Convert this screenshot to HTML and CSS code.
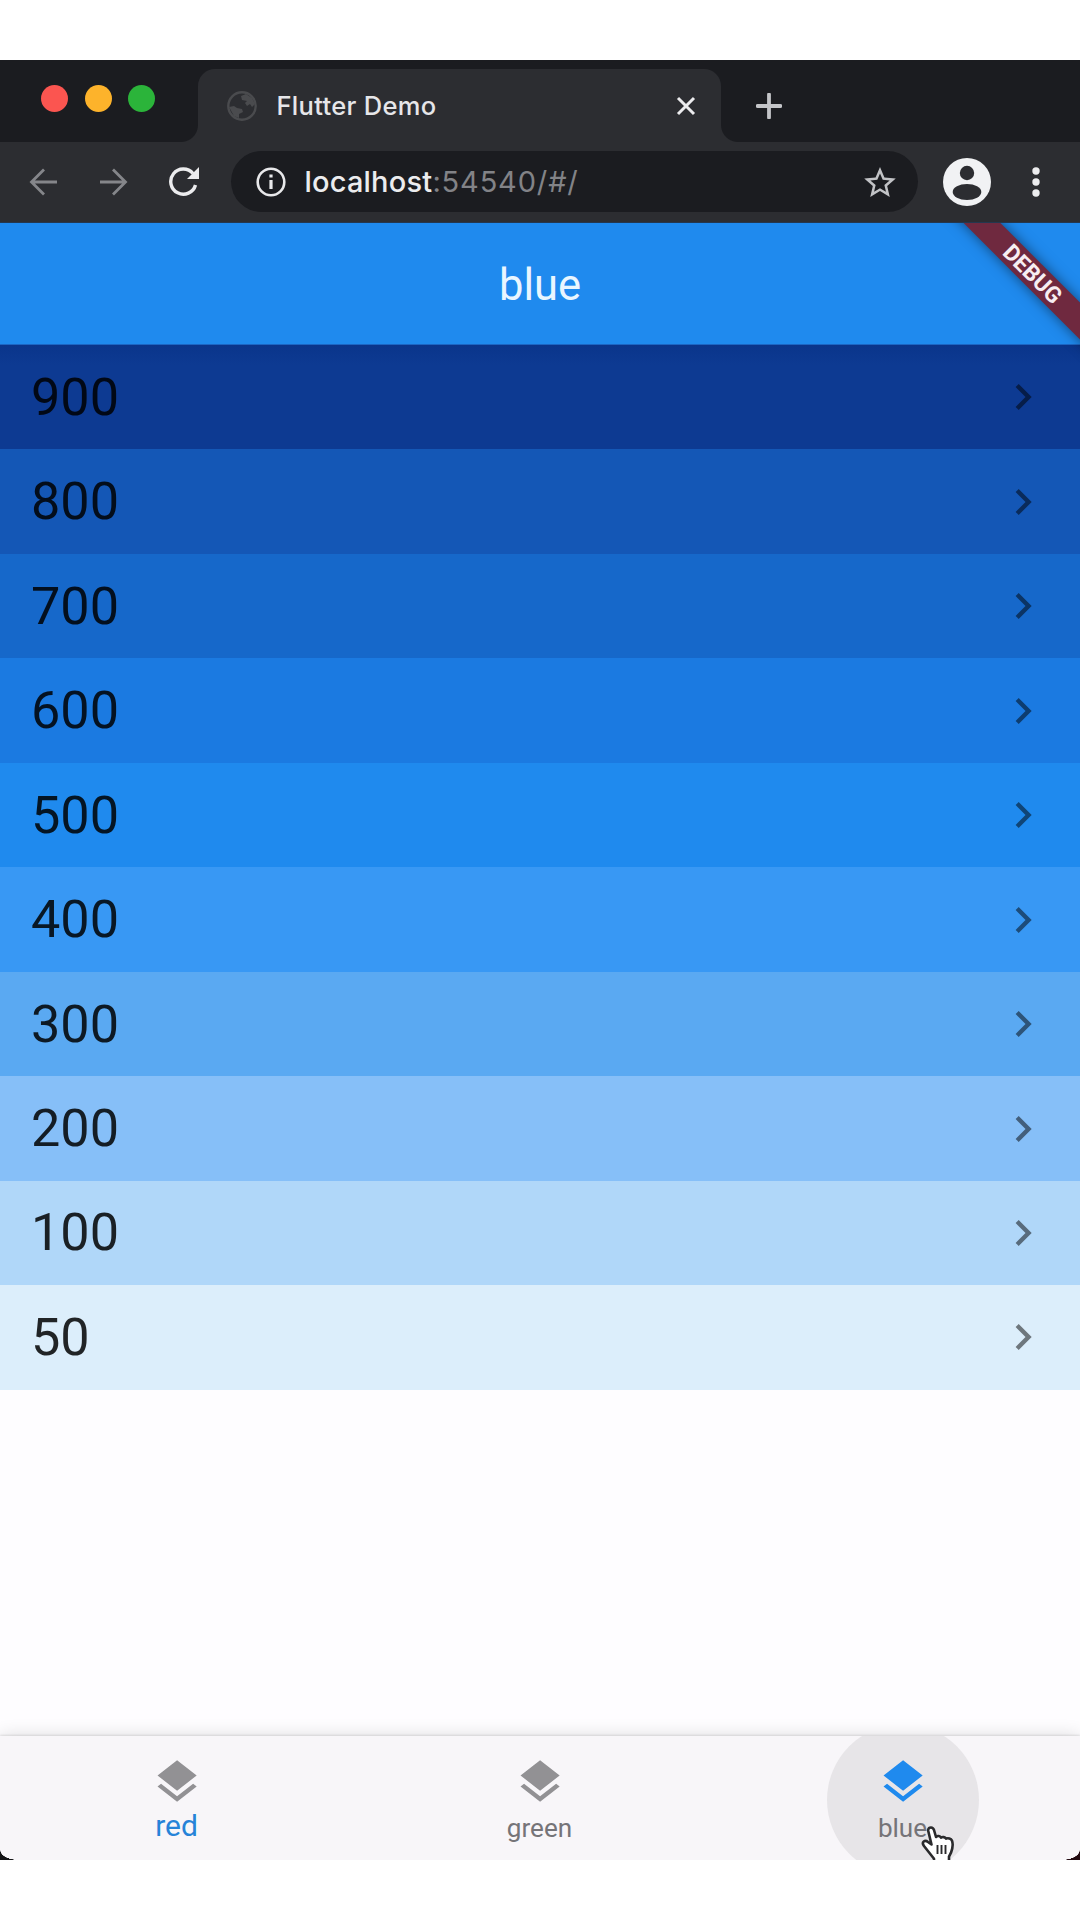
FILE: index.html
```html
<!DOCTYPE html>
<html lang="en">
<head>
<meta charset="utf-8">
<title>Flutter Demo</title>
<link rel="stylesheet" href="styles.css">
</head>
<body>
<svg class="defs" width="0" height="0" aria-hidden="true">
  <symbol id="layers" viewBox="0 0 24 24"><path d="M11.99 18.54l-7.37-5.73L3 14.07l9 7 9-7-1.63-1.27-7.38 5.74zM12 16l7.36-5.73L21 9l-9-7-9 7 1.63 1.27L12 16z"/></symbol>
  <symbol id="chevron" viewBox="0 0 24 24"><path d="M8.59 16.59L13.17 12 8.59 7.41 10 6l6 6-6 6z"/></symbol>
</svg>
<div class="window">
  <header class="tabs">
    <div class="lights"><i class="light red"></i><i class="light amber"></i><i class="light green"></i></div>
    <div class="tab">
      <svg class="globe" viewBox="0 0 30 30"><circle cx="15" cy="15" r="13.7" fill="none" stroke="#4a4b4e" stroke-width="2.4"/><path fill="#4a4b4e" d="M14 5l5-2 6 4 3 6-3 3-2-3-3 2-2-3 2-2-5-1zM2 16l5-1 3 2 5 1 1 3-4 2v4l-5-2z"/></svg>
      <span class="tab-title">Flutter Demo</span>
      <svg class="close" viewBox="0 0 20 20"><path d="M2 2l16 16M18 2L2 18"/></svg>
    </div>
    <svg class="plus" viewBox="0 0 26 26"><path d="M13 1.5v23M1.5 13h23"/></svg>
  </header>
  <div class="toolbar">
    <svg class="arrow" viewBox="0 0 30 28"><path d="M28 14H3M15 1.5L2.5 14 15 26.5"/></svg>
    <svg class="arrow" viewBox="0 0 30 28"><path d="M2 14h25M15 1.5L27.5 14 15 26.5"/></svg>
    <svg class="reload" viewBox="0 0 32 32"><path d="M27.5 19A12.6 12.6 0 1 1 25 7.5" fill="none" stroke="#ececee" stroke-width="3.4"/><path d="M31 1v12H19z" fill="#ececee"/></svg>
    <div class="omnibox">
      <svg class="info" viewBox="0 0 30 30"><circle cx="15" cy="15" r="13.3" fill="none" stroke="#e8e8ea" stroke-width="2.6"/><path d="M13.4 7.5h3.2v3.1h-3.2zM13.4 13h3.2v9h-3.2z" fill="#e8e8ea"/></svg>
      <span class="url">localhost<span class="path">:54540/#/</span></span>
      <svg class="star" viewBox="2 2 20 19"><path d="M22 9.24l-7.19-.62L12 2 9.19 8.63 2 9.24l5.46 4.73L5.82 21 12 17.27 18.18 21l-1.63-7.03L22 9.24zM12 15.4l-3.76 2.27 1-4.28-3.32-2.88 4.38-.38L12 6.1l1.71 4.04 4.38.38-3.32 2.88 1 4.28L12 15.4z"/></svg>
    </div>
    <svg class="avatar" viewBox="0 0 48 48"><circle cx="24" cy="24" r="24" fill="#f1f2f4"/><circle cx="24" cy="15" r="7.2" fill="#2c2d31"/><ellipse cx="24" cy="34" rx="14.3" ry="8" fill="#2c2d31"/></svg>
    <svg class="dots" viewBox="0 0 8 30"><circle cx="4" cy="4" r="3.7"/><circle cx="4" cy="15" r="3.7"/><circle cx="4" cy="26" r="3.7"/></svg>
  </div>
  <main class="app">
    <div class="appbar"><h1>blue</h1></div>
    <div class="ribbon">DEBUG</div>
    <ul class="shades">
      <li class="s900">900<svg><use href="#chevron"/></svg></li>
      <li class="s800">800<svg><use href="#chevron"/></svg></li>
      <li class="s700">700<svg><use href="#chevron"/></svg></li>
      <li class="s600">600<svg><use href="#chevron"/></svg></li>
      <li class="s500">500<svg><use href="#chevron"/></svg></li>
      <li class="s400">400<svg><use href="#chevron"/></svg></li>
      <li class="s300">300<svg><use href="#chevron"/></svg></li>
      <li class="s200">200<svg><use href="#chevron"/></svg></li>
      <li class="s100">100<svg><use href="#chevron"/></svg></li>
      <li class="s50">50<svg><use href="#chevron"/></svg></li>
    </ul>
    <nav class="bottom">
      <a class="item selected"><svg><use href="#layers"/></svg><span>red</span></a>
      <a class="item"><svg><use href="#layers"/></svg><span>green</span></a>
      <a class="item pressed"><svg><use href="#layers"/></svg><span>blue</span></a>
      <svg class="cursor" viewBox="0 0 34 40"><path d="M7 4C8 .5 12 1 13 4l2 7c1.500-1.500 4-1.200 5 .7 1.500-1.200 4-.7 5 1 2-1 5 0 6 2 1.500 4 .5 8-1 12l-2 4v8H13v-6L3 20c-3-4 1-6.500 4-4l3.500 2.500z" fill="#fff" stroke="#2a2a2c" stroke-width="2.6" stroke-linejoin="round"/><path d="M16.500 19v9M20.500 19v9M24.500 19v9" stroke="#2a2a2c" stroke-width="1.9"/></svg>
    </nav>
  </main>
  <i class="corner left"></i><i class="corner right"></i>
</div>
</body>
</html>
```
FILE: styles.css
```css
* { box-sizing: border-box; }
body { margin: 0; height: 1920px; padding: 60px 0; background: #fff; overflow: hidden; }
svg { display: block; flex: none; }
.defs { position: absolute; }
.window { position: relative; height: 1800px; display: flex; flex-direction: column; overflow: hidden; background: #2c2d31; }

.tabs { height: 82px; background: #1b1c20; display: flex; padding-top: 9px; }
.lights { width: 198px; display: flex; gap: 16.5px; padding: 15.5px 0 0 41px; }
.light { width: 27px; height: 27px; border-radius: 50%; }
.light.red { background: #fb5550; }
.light.amber { background: #fdb32b; }
.light.green { background: #2bb43a; }
.tab { position: relative; width: 523px; height: 73px; border-radius: 17px 17px 0 0; background: #2c2d31; display: flex; align-items: center; padding: 0 25px 0 29px; }
.tab::before, .tab::after { content: ""; position: absolute; bottom: 0; width: 17px; height: 17px; }
.tab::before { left: -17px; background: radial-gradient(circle at 0 0, #1b1c20 16.5px, #2c2d31 17.5px); }
.tab::after { right: -17px; background: radial-gradient(circle at 100% 0, #1b1c20 16.5px, #2c2d31 17.5px); }
.globe { width: 30px; height: 30px; }
.tab-title { margin-left: 19.5px; font: 500 25.5px/30px Inter, sans-serif; letter-spacing: .3px; color: #e6e6e9; flex: 1; white-space: nowrap; }
.close { width: 20px; height: 20px; stroke: #ececee; stroke-width: 3; }
.plus { width: 26px; height: 26px; margin: 23.5px 0 0 35px; stroke: #c4c5c8; stroke-width: 3.8; stroke-linecap: round; }

.toolbar { height: 81px; display: flex; align-items: center; padding: 0 0 1px 28.5px; background: #2c2d31; border-bottom: 1px solid #24374f; }
.arrow { width: 30px; height: 28px; margin-right: 39.5px; fill: none; stroke: #85868a; stroke-width: 2.8; }
.reload { width: 32px; height: 32px; }
.omnibox { width: 687px; height: 61px; margin-left: 31.5px; border-radius: 31px; background: #1b1c20; display: flex; align-items: center; padding: 0 22.5px 0 24.5px; }
.info { width: 30px; height: 30px; }
.url { margin-left: 19px; flex: 1; font: 500 29px/36px Inter, sans-serif; letter-spacing: .2px; color: #ececee; white-space: nowrap; }
.path { color: #828387; font-weight: 400; letter-spacing: .85px; }
.star { width: 32px; height: 30px; fill: #c2c3c6; }
.avatar { width: 48px; height: 48px; margin-left: 24.5px; }
.dots { width: 8px; height: 30px; margin-left: 41.5px; fill: #ececee; }

.app { position: relative; flex: 1; display: flex; flex-direction: column; overflow: hidden; background: #fefdff; font-family: Roboto, sans-serif; }
.appbar { height: 122px; flex: none; background: #1f8aee; display: flex; align-items: center; justify-content: center; padding-top: 4px; border-bottom: 1px solid #1c66c4; }
h1 { margin: 0; font-size: 43.5px; font-weight: 400; line-height: 52px; color: #e9f6ff; }
.ribbon { position: absolute; top: 69.6px; right: 0; width: 240px; height: 26px; margin: -33.4px -70.8px 0 0; padding-left: 5px; transform: rotate(45deg); background: #6f293f; box-shadow: 0 0 13px rgba(0, 0, 0, .5); color: #f7eef2; font-size: 22.8px; font-weight: 700; line-height: 27px; text-align: center; }
.shades { margin: 0; padding: 0; list-style: none; font-size: 52.2px; color: rgba(0, 0, 0, .85); }
.shades li { height: 104.48px; display: flex; align-items: center; justify-content: space-between; padding: 0 31px 0 31px; }
.shades svg { width: 52px; height: 52px; fill: rgba(0, 0, 0, .5); }
.s900 { background: linear-gradient(#0a358b, #0d3a92 20px); }
.s800 { background: #1457b6; }
.s700 { background: #1668ca; }
.s600 { background: #1b7ae1; }
.s500 { background: #1f8aee; }
.s400 { background: #3898f4; }
.s300 { background: #5aa9f2; }
.s200 { background: #86bff8; }
.s100 { background: #b0d7f9; }
.s50 { background: #dceefb; }

.bottom { position: relative; height: 124px; margin-top: auto; display: grid; grid-template-columns: 354fr 372fr 354fr; background: #f8f6f9; box-shadow: 0 0 17px rgba(0, 0, 0, .14), 0 -1px 2px rgba(0, 0, 0, .1); }
.item { position: relative; display: flex; flex-direction: column; align-items: center; padding-top: 19.5px; font-size: 26.1px; line-height: 30px; color: #757478; overflow: hidden; }
.item svg { position: relative; width: 52.2px; height: 52.2px; fill: #929194; }
.item span { position: relative; margin: 5.2px 1px 0 0; }
.selected { color: #2683d8; font-size: 30px; }
.selected span { margin-top: 3.2px; }
.pressed::before { content: ""; position: absolute; left: 101px; top: -12px; width: 152px; height: 152px; border-radius: 50%; background: #e7e5e8; }
.pressed svg { fill: #1f8aee; }
.cursor { position: absolute; left: 921px; top: 89.5px; width: 34px; height: 40px; }
.corner { position: absolute; bottom: 0; width: 18px; height: 10px; }
.corner.left { left: 0; background: radial-gradient(ellipse 18px 10px at 100% 0, transparent 97%, #131315 100%); }
.corner.right { right: 0; background: radial-gradient(ellipse 18px 10px at 0 0, transparent 97%, #220910 100%); }
```
